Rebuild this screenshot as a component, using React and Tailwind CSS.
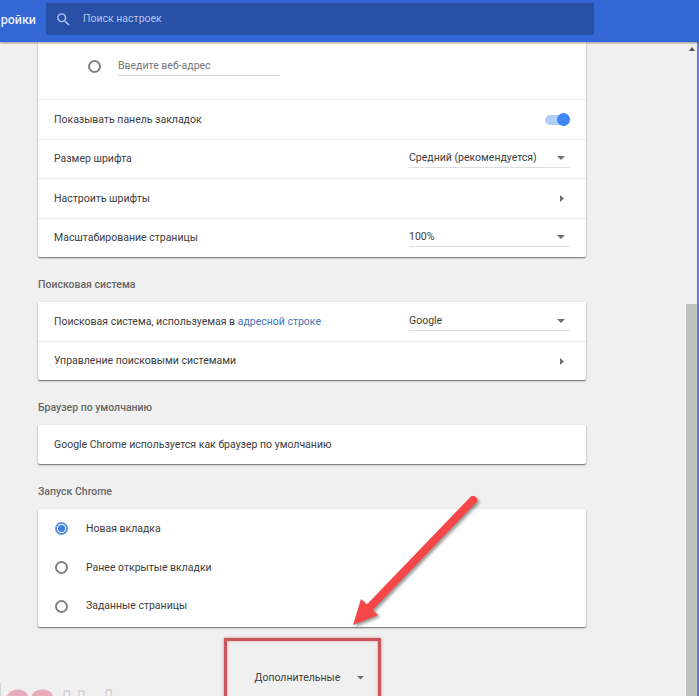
import React, { useState } from 'react';
import clsx from 'clsx';

function Card({ className, children }) {
  return (
    <div className={clsx('w-[548px] rounded-b-[2px] bg-white shadow-[0_1px_1px_rgba(0,0,0,0.42),0_1px_3px_rgba(0,0,0,0.2)]', className)}>
      {children}
    </div>
  );
}

function SectionTitle({ children }) {
  return <h2 className="flex h-[45px] items-center pt-[10px] font-medium text-[#686868]">{children}</h2>;
}

function Row({ label, className, children }) {
  return (
    <div className={clsx('flex items-center justify-between pl-4 pr-4', className)}>
      <span>{label}</span>
      {children}
    </div>
  );
}

function ArrowDown({ className }) {
  return (
    <svg viewBox="0 0 8 4" className={clsx('fill-[#707070]', className)}>
      <path d="M0 0h8L4 4z" />
    </svg>
  );
}

function ArrowRight() {
  return (
    <svg viewBox="0 0 4 7" className="mr-[6px] h-[7px] w-1 fill-[#707070]">
      <path d="M0 0v7l4-3.5z" />
    </svg>
  );
}

function Select({ value }) {
  return (
    <button className="mb-px flex h-[19px] w-[161px] items-center justify-between border-b border-[#dedede] pr-[5px] text-left">
      <span>{value}</span>
      <ArrowDown className="h-1 w-2" />
    </button>
  );
}

function Radio({ checked }) {
  return (
    <span className={clsx('flex size-[13px] shrink-0 items-center justify-center rounded-full border-2', checked ? 'border-[#5a93de]' : 'border-[#808080]')}>
      {checked && <span className="size-[7px] rounded-full bg-[#3f7fd6]" />}
    </span>
  );
}

const STARTUP_OPTIONS = ['Новая вкладка', 'Ранее открытые вкладки', 'Заданные страницы'];

export default function App() {
  const [startup, setStartup] = useState(0);

  return (
    <div className="relative flex h-[696px] w-[699px] flex-col overflow-hidden bg-[#f0f0f0] font-[Roboto,sans-serif] text-[10.5px] leading-[14px] text-[#3c3c3c]">
      <header className="z-10 flex h-[42px] shrink-0 items-start bg-[#3367d6] pt-[3px] shadow-[0_1px_2px_rgba(0,0,0,0.4)]">
        <div className="flex h-8 w-[46px] items-center justify-end pr-[10px] pt-[2px]">
          <h1 className="text-[12.5px] font-medium text-[#e8eefb]">ройки</h1>
        </div>
        <div className="flex h-8 w-[548px] items-center rounded-[1px] bg-[#2850a7]">
          <svg viewBox="0 0 24 24" className="ml-[9px] size-[17px] fill-[#b4c6ee]">
            <path d="M15.5 14h-.79l-.28-.27A6.471 6.471 0 0 0 16 9.5 6.5 6.5 0 1 0 9.5 16c1.61 0 3.09-.59 4.23-1.57l.27.28v.79l5 4.99L20.49 19l-4.99-5zm-6 0C7.01 14 5 11.99 5 9.5S7.01 5 9.5 5 14 7.01 14 9.5 11.99 14 9.5 14z" />
          </svg>
          <span className="ml-[11px] text-[#b4c5ee]">Поиск настроек</span>
        </div>
      </header>

      <div className="flex min-h-0 flex-1">
        <main className="ml-[38px] flex w-[648px] flex-col">
          <Card>
            <div className="flex h-[57px] items-start pl-[50px] pt-[15px]">
              <div className="pt-[3px]"><Radio /></div>
              <div className="ml-[17px] h-[19px] w-[162px] border-b border-[#d8d8d8] pt-[2px] text-[#777]">
                Введите веб-адрес
              </div>
            </div>
            <Row label="Показывать панель закладок" className="h-10 border-t border-[#ececec]">
              <button className="flex h-[10px] w-[25px] items-center justify-end rounded-full bg-[#b3cdf6]">
                <span className="size-[13px] rounded-full bg-[#4285f4]" />
              </button>
            </Row>
            <Row label="Размер шрифта" className="h-[39px] border-t border-[#ececec]">
              <Select value="Средний (рекомендуется)" />
            </Row>
            <Row label="Настроить шрифты" className="h-10 border-t border-[#ececec]">
              <ArrowRight />
            </Row>
            <Row label="Масштабирование страницы" className="h-[39px] border-t border-[#ececec]">
              <Select value="100%" />
            </Row>
          </Card>

          <SectionTitle>Поисковая система</SectionTitle>
          <Card>
            <Row
              label={<>Поисковая система, используемая в <a className="text-[#4c6fb8]">адресной строке</a></>}
              className="h-[39px]"
            >
              <Select value="Google" />
            </Row>
            <Row label="Управление поисковыми системами" className="h-[39px] border-t border-[#ececec]">
              <ArrowRight />
            </Row>
          </Card>

          <SectionTitle>Браузер по умолчанию</SectionTitle>
          <Card>
            <Row label="Google Chrome используется как браузер по умолчанию" className="h-[39px]" />
          </Card>

          <SectionTitle>Запуск Chrome</SectionTitle>
          <Card>
            {STARTUP_OPTIONS.map((option, i) => (
              <label key={option} className="flex h-[39px] items-center gap-[18px] pl-[17px] last:mb-px last:pb-px" onClick={() => setStartup(i)}>
                <Radio checked={startup === i} />
                <span>{option}</span>
              </label>
            ))}
          </Card>

          <button className="ml-[216.5px] mt-[44px] flex h-[14px] shrink-0 items-center">
            <span>Дополнительные</span>
            <ArrowDown className="ml-[17px] h-[3.5px] w-[7px]" />
          </button>
        </main>

        {/* scrollbar */}
        <div className="flex w-[13px] flex-col items-center justify-between border-r-2 border-[#6b78d0]">
          <svg viewBox="0 0 6 4" className="mt-[5px] h-1 w-[6px] fill-[#505050]">
            <path d="M0 4L3 0l3 4z" />
          </svg>
          <div className="h-[392px] w-full bg-[#c0c2bf]" />
        </div>
      </div>

      {/* callout frame and arrow */}
      <div className="absolute left-[224px] top-[638px] h-[80px] w-[157px] border-[3px] border-[#c9565a] shadow-[0_0_3px_rgba(200,70,70,0.6),inset_0_0_3px_rgba(200,70,70,0.5)]" />
      <svg viewBox="0 0 150 150" className="absolute left-[340px] top-[485px] size-[150px] drop-shadow-[2px_2px_1.5px_rgba(0,0,0,0.4)]">
        <path d="M133 15L29 123" stroke="#f54747" strokeWidth="8" strokeLinecap="round" />
        <path d="M13 140l8-26 17 16z" fill="#f54747" />
      </svg>

      {/* watermark */}
      <div className="absolute left-0 top-[683px] h-[13px] w-px bg-[#d4d4d4]" />
      <div className="absolute left-[6px] top-[687px] flex items-start leading-[32px]">
        <span className="w-[56px] text-[34px] font-black tracking-[2px] text-[#e8acbd] [-webkit-text-stroke:3px_#e8acbd]">OS</span>
        <span className="text-[34px] font-bold text-[#f4f4f4] [-webkit-text-stroke:1px_#c8c8c8]">Helper</span>
      </div>
    </div>
  );
}
